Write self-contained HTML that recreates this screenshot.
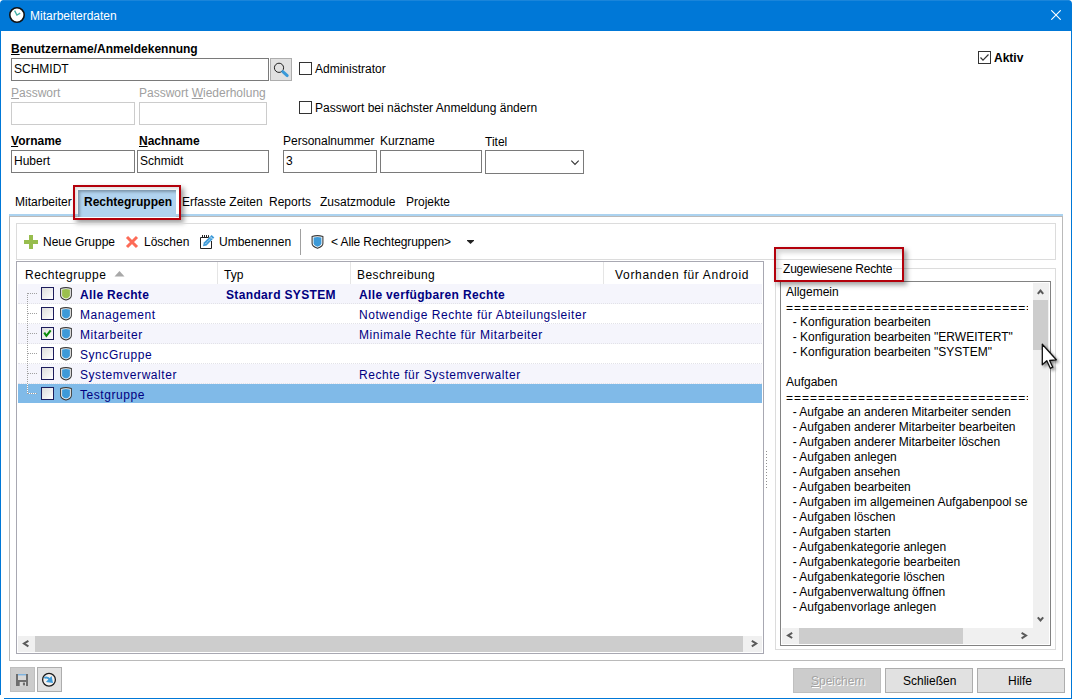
<!DOCTYPE html>
<html><head><meta charset="utf-8">
<style>
*{box-sizing:border-box}
html,body{margin:0;padding:0}
body{width:1072px;height:699px;position:relative;overflow:hidden;background:#fff;font-family:"Liberation Sans",sans-serif;font-size:12px;color:#000}
.a{position:absolute}
.t{position:absolute;white-space:pre;line-height:14px;font-size:12px}
.b{font-weight:bold}
.u{text-decoration:underline;text-underline-offset:1px}
.in{position:absolute;border:1px solid #7a7a7a;background:#fff}
.dis{border-color:#cccccc}
.cb{position:absolute;width:13px;height:13px;border:1px solid #333;background:#fff}
.grey{color:#a0a0a0}
.btn{position:absolute;background:#e1e1e1;border:1px solid #adadad}
</style></head><body>
<!-- title bar -->
<div class="a" style="left:0;top:0;width:1072px;height:31px;background:#0078d7;border-radius:4px 4px 0 0"></div>
<div class="a" style="left:3px;top:0;width:1066px;height:1px;background:#1a85da"></div>
<div class="a" style="left:0;top:31px;width:1px;height:664px;background:#0078d7"></div>
<div class="a" style="left:1071px;top:31px;width:1px;height:668px;background:#0078d7"></div>
<div class="a" style="left:4px;top:698px;width:1068px;height:1px;background:#0078d7"></div>
<svg class="a" style="left:9px;top:7px" width="17" height="17" viewBox="0 0 17 17"><circle cx="8" cy="8" r="7.2" fill="#fff" stroke="#111" stroke-width="1.6"/><path d="M5.6 3.6 L7.9 8 L11.2 6.1" fill="none" stroke="#40aea6" stroke-width="1.3"/></svg>
<div class="t" style="left:30px;top:9px;color:#fff">Mitarbeiterdaten</div>
<svg class="a" style="left:1051px;top:10px" width="10" height="10" viewBox="0 0 10 10"><path d="M0.3 0.3 L9.7 9.7 M9.7 0.3 L0.3 9.7" stroke="#fff" stroke-width="1.1"/></svg>

<!-- form -->
<div class="t b" style="left:11px;top:42px"><span class="u">B</span>enutzername/Anmeldekennung</div>
<div class="in" style="left:11px;top:58px;width:258px;height:23px"></div>
<div class="t" style="left:14px;top:62px">SCHMIDT</div>
<div class="btn" style="left:270px;top:58px;width:22px;height:23px"></div>
<svg class="a" style="left:272px;top:60px" width="18" height="19" viewBox="0 0 18 19"><circle cx="7" cy="7.8" r="4.6" fill="none" stroke="#222" stroke-width="1"/><path d="M10.8 11.6 L15.2 15.6" stroke="#3a9ad9" stroke-width="3" stroke-linecap="round"/></svg>
<div class="cb" style="left:299px;top:62px"></div>
<div class="t" style="left:315px;top:62px">Administrator</div>

<div class="t grey" style="left:11px;top:86px"><span class="u">P</span>asswort</div>
<div class="t grey" style="left:139px;top:86px">Passwort <span class="u">W</span>iederholung</div>
<div class="in dis" style="left:11px;top:102px;width:124px;height:23px"></div>
<div class="in dis" style="left:139px;top:102px;width:128px;height:23px"></div>
<div class="cb" style="left:299px;top:101px"></div>
<div class="t" style="left:315px;top:101px">Passwort bei nächster Anmeldung ändern</div>

<div class="t b" style="left:11px;top:134px"><span class="u">V</span>orname</div>
<div class="t b" style="left:139px;top:134px"><span class="u">N</span>achname</div>
<div class="t" style="left:283px;top:134px">Personalnummer</div>
<div class="t" style="left:380px;top:134px">Kurzname</div>
<div class="t" style="left:485px;top:135px">Titel</div>
<div class="in" style="left:11px;top:150px;width:124px;height:23px"></div>
<div class="t" style="left:14px;top:154px">Hubert</div>
<div class="in" style="left:137px;top:150px;width:132px;height:23px"></div>
<div class="t" style="left:140px;top:154px">Schmidt</div>
<div class="in" style="left:283px;top:150px;width:94px;height:23px"></div>
<div class="t" style="left:286px;top:154px">3</div>
<div class="in" style="left:380px;top:150px;width:102px;height:23px"></div>
<div class="in" style="left:485px;top:150px;width:99px;height:24px"></div>
<svg class="a" style="left:570px;top:159px" width="11" height="8" viewBox="0 0 11 8"><path d="M1.3 1.7 L5 5.4 L8.7 1.7" fill="none" stroke="#333" stroke-width="1.1"/></svg>

<div class="cb" style="left:978px;top:51px;border-color:#333"></div>
<svg class="a" style="left:978px;top:51px" width="13" height="13" viewBox="0 0 13 13"><path d="M2.5 6.5 L5 9.2 L10.5 3.5" fill="none" stroke="#333" stroke-width="1.2"/></svg>
<div class="t b" style="left:994px;top:51px">Aktiv</div>


<!-- tabs -->
<div class="a" style="left:9px;top:216px;width:1054px;height:445px;border:1px solid #bababa"></div>
<div class="a" style="left:9px;top:214px;width:1054px;height:2px;background:#acd3f0"></div>
<div class="a" style="left:78px;top:190px;width:98px;height:27px;background:#b1d3ef;box-shadow:inset 2px 2px 3px rgba(0,0,0,0.28)"></div>
<div class="t" style="left:15px;top:195px">Mitarbeiter</div>
<div class="t b" style="left:84px;top:195px">Rechtegruppen</div>
<div class="t" style="left:182px;top:195px">Erfasste Zeiten</div>
<div class="t" style="left:269px;top:195px">Reports</div>
<div class="t" style="left:320px;top:195px">Zusatzmodule</div>
<div class="t" style="left:406px;top:195px">Projekte</div>
<div class="a" style="left:73px;top:185px;width:108px;height:35px;border:2px solid #b3000b;box-shadow:3px 3px 5px rgba(0,0,0,0.38),inset 2px 2px 3px rgba(0,0,0,0.12)"></div>

<!-- toolbar -->
<div class="a" style="left:16px;top:223px;width:1040px;height:37px;border:1px solid #dcdcdc"></div>
<svg class="a" style="left:24px;top:235px" width="14" height="14" viewBox="0 0 14 14"><path d="M5 0h4v5h5v4h-5v5h-4v-5h-5v-4h5z" fill="#97bd4e"/></svg>
<div class="t" style="left:43px;top:235px">Neue Gruppe</div>
<svg class="a" style="left:125px;top:235px" width="14" height="14" viewBox="0 0 14 14"><path d="M2 2 L12 12 M12 2 L2 12" stroke="#fd6b57" stroke-width="3"/></svg>
<div class="t" style="left:144px;top:235px">Löschen</div>
<svg class="a" style="left:200px;top:234px" width="15" height="15" viewBox="0 0 15 15"><path d="M0.5 3.5 H8 M0.5 3.5 V14.5 H11.5 V7" fill="none" stroke="#222" stroke-width="1"/><path d="M2.5 1 v3 M4.5 1 v3 M6.5 1 v3 M8.5 1.2 v2.6" stroke="#222" stroke-width="1"/><path d="M3 12.3 L3.8 8.6 L11.6 0.9 L14.3 3.6 L6.6 11.4 Z" fill="#3d9ad8"/><path d="M5.2 10.1 L11 4.3" stroke="#fff" stroke-width="0.9" stroke-dasharray="1.1 0.9"/><path d="M10.2 2.6 L12.6 5" stroke="#fff" stroke-width="0.8"/></svg>
<div class="t" style="left:219px;top:235px">Umbenennen</div>
<div class="a" style="left:300px;top:229px;width:1px;height:26px;background:#a0a0a0"></div>
<svg class="a" style="left:310px;top:234px" width="15" height="16" viewBox="0 0 15 16"><path d="M2.1 2.6 Q7.5 0.6 12.9 2.6 V9.4 C12.9 11.9 9.5 13.5 7.5 14.3 C5.5 13.5 2.1 11.9 2.1 9.4 Z" fill="#fff" stroke="#3a3a3a" stroke-width="1.1"/><path d="M3.6 3.6 Q7.5 2.3 11.4 3.6 V9.2 C11.4 11.1 9.1 12.2 7.5 12.8 C5.9 12.2 3.6 11.1 3.6 9.2 Z" fill="#3d9ad8"/></svg>
<div class="t" style="left:331px;top:235px;letter-spacing:-0.1px">&lt; Alle Rechtegruppen&gt;</div>
<svg class="a" style="left:467px;top:240px" width="7" height="4" viewBox="0 0 7 4"><path d="M0 0 H7 V0.8 L3.5 4 L0 0.8 Z" fill="#222"/></svg>

<!-- list -->
<div class="a" style="left:16px;top:261px;width:748px;height:393px;border:1px solid #a8a8b2"></div>
<div class="t" style="left:25px;top:268px;letter-spacing:0.5px">Rechtegruppe</div>
<svg class="a" style="left:114px;top:270px" width="11" height="7" viewBox="0 0 11 7"><path d="M0.5 6.5h10L5.5 1z" fill="#a8a8a8"/></svg>
<div class="a" style="left:217px;top:262px;width:1px;height:22px;background:#e5e5e5"></div>
<div class="a" style="left:350px;top:262px;width:1px;height:22px;background:#e5e5e5"></div>
<div class="a" style="left:603px;top:262px;width:1px;height:22px;background:#e5e5e5"></div>
<div class="t" style="left:224px;top:268px">Typ</div>
<div class="t" style="left:357px;top:268px;letter-spacing:0.4px">Beschreibung</div>
<div class="t" style="left:615px;top:268px;letter-spacing:0.7px">Vorhanden für Android</div>
<div class="a" style="left:18px;top:284px;width:744px;height:20px;background:#f5f5fc"></div>
<div class="a" style="left:18px;top:303px;width:744px;height:1px;border-top:1px dotted #e2e2e8"></div>
<div class="a" style="left:28px;top:293px;width:9px;height:1px;border-top:1px dotted #a0a0a0"></div>
<div class="a" style="left:41px;top:287px;width:13px;height:13px;border:1px solid #1c1c5c;background:linear-gradient(135deg,#dcdcdc,#fff)"></div>
<svg class="a" style="left:59px;top:286px" width="14" height="16" viewBox="0 0 14 16"><path d="M1.65 2.6 Q7 0.6 12.35 2.6 V9.4 C12.35 11.8 9 13.4 7 14.1 C5 13.4 1.65 11.8 1.65 9.4 Z" fill="#fff" stroke="#3a3a3a" stroke-width="1.1"/><path d="M3.1 3.6 Q7 2.3 10.9 3.6 V9.2 C10.9 11 8.6 12.1 7 12.6 C5.4 12.1 3.1 11 3.1 9.2 Z" fill="#9bbf4e"/></svg>
<div class="t b" style="left:80px;top:288px;color:#000080;letter-spacing:0.35px">Alle Rechte</div>
<div class="t b" style="left:226px;top:288px;color:#000080;letter-spacing:0.35px">Standard SYSTEM</div>
<div class="t b" style="left:359px;top:288px;color:#000080;letter-spacing:0.35px">Alle verfügbaren Rechte</div>
<div class="a" style="left:18px;top:304px;width:744px;height:20px;background:#fff"></div>
<div class="a" style="left:18px;top:323px;width:744px;height:1px;border-top:1px dotted #e2e2e8"></div>
<div class="a" style="left:28px;top:313px;width:9px;height:1px;border-top:1px dotted #a0a0a0"></div>
<div class="a" style="left:41px;top:307px;width:13px;height:13px;border:1px solid #1c1c5c;background:linear-gradient(135deg,#dcdcdc,#fff)"></div>
<svg class="a" style="left:59px;top:306px" width="14" height="16" viewBox="0 0 14 16"><path d="M1.65 2.6 Q7 0.6 12.35 2.6 V9.4 C12.35 11.8 9 13.4 7 14.1 C5 13.4 1.65 11.8 1.65 9.4 Z" fill="#fff" stroke="#3a3a3a" stroke-width="1.1"/><path d="M3.1 3.6 Q7 2.3 10.9 3.6 V9.2 C10.9 11 8.6 12.1 7 12.6 C5.4 12.1 3.1 11 3.1 9.2 Z" fill="#3d9ad8"/></svg>
<div class="t" style="left:80px;top:308px;color:#000080;letter-spacing:0.55px">Management</div>
<div class="t" style="left:359px;top:308px;color:#000080;letter-spacing:0.55px">Notwendige Rechte für Abteilungsleiter</div>
<div class="a" style="left:18px;top:324px;width:744px;height:20px;background:#f5f5fc"></div>
<div class="a" style="left:18px;top:343px;width:744px;height:1px;border-top:1px dotted #e2e2e8"></div>
<div class="a" style="left:28px;top:333px;width:9px;height:1px;border-top:1px dotted #a0a0a0"></div>
<div class="a" style="left:41px;top:327px;width:13px;height:13px;border:1px solid #1c1c5c;background:linear-gradient(135deg,#dcdcdc,#fff)"></div>
<svg class="a" style="left:41px;top:327px" width="13" height="13" viewBox="0 0 13 13"><path d="M3.2 5.6 L5.4 8.8 L9.7 3.3" fill="none" stroke="#0b8a0b" stroke-width="2.1"/></svg>
<svg class="a" style="left:59px;top:326px" width="14" height="16" viewBox="0 0 14 16"><path d="M1.65 2.6 Q7 0.6 12.35 2.6 V9.4 C12.35 11.8 9 13.4 7 14.1 C5 13.4 1.65 11.8 1.65 9.4 Z" fill="#fff" stroke="#3a3a3a" stroke-width="1.1"/><path d="M3.1 3.6 Q7 2.3 10.9 3.6 V9.2 C10.9 11 8.6 12.1 7 12.6 C5.4 12.1 3.1 11 3.1 9.2 Z" fill="#3d9ad8"/></svg>
<div class="t" style="left:80px;top:328px;color:#000080;letter-spacing:0.55px">Mitarbeiter</div>
<div class="t" style="left:359px;top:328px;color:#000080;letter-spacing:0.55px">Minimale Rechte für Mitarbeiter</div>
<div class="a" style="left:18px;top:344px;width:744px;height:20px;background:#fff"></div>
<div class="a" style="left:18px;top:363px;width:744px;height:1px;border-top:1px dotted #e2e2e8"></div>
<div class="a" style="left:28px;top:353px;width:9px;height:1px;border-top:1px dotted #a0a0a0"></div>
<div class="a" style="left:41px;top:347px;width:13px;height:13px;border:1px solid #1c1c5c;background:linear-gradient(135deg,#dcdcdc,#fff)"></div>
<svg class="a" style="left:59px;top:346px" width="14" height="16" viewBox="0 0 14 16"><path d="M1.65 2.6 Q7 0.6 12.35 2.6 V9.4 C12.35 11.8 9 13.4 7 14.1 C5 13.4 1.65 11.8 1.65 9.4 Z" fill="#fff" stroke="#3a3a3a" stroke-width="1.1"/><path d="M3.1 3.6 Q7 2.3 10.9 3.6 V9.2 C10.9 11 8.6 12.1 7 12.6 C5.4 12.1 3.1 11 3.1 9.2 Z" fill="#3d9ad8"/></svg>
<div class="t" style="left:80px;top:348px;color:#000080;letter-spacing:0.55px">SyncGruppe</div>
<div class="a" style="left:18px;top:364px;width:744px;height:20px;background:#f5f5fc"></div>
<div class="a" style="left:18px;top:383px;width:744px;height:1px;border-top:1px dotted #e2e2e8"></div>
<div class="a" style="left:28px;top:373px;width:9px;height:1px;border-top:1px dotted #a0a0a0"></div>
<div class="a" style="left:41px;top:367px;width:13px;height:13px;border:1px solid #1c1c5c;background:linear-gradient(135deg,#dcdcdc,#fff)"></div>
<svg class="a" style="left:59px;top:366px" width="14" height="16" viewBox="0 0 14 16"><path d="M1.65 2.6 Q7 0.6 12.35 2.6 V9.4 C12.35 11.8 9 13.4 7 14.1 C5 13.4 1.65 11.8 1.65 9.4 Z" fill="#fff" stroke="#3a3a3a" stroke-width="1.1"/><path d="M3.1 3.6 Q7 2.3 10.9 3.6 V9.2 C10.9 11 8.6 12.1 7 12.6 C5.4 12.1 3.1 11 3.1 9.2 Z" fill="#3d9ad8"/></svg>
<div class="t" style="left:80px;top:368px;color:#000080;letter-spacing:0.55px">Systemverwalter</div>
<div class="t" style="left:359px;top:368px;color:#000080;letter-spacing:0.55px">Rechte für Systemverwalter</div>
<div class="a" style="left:18px;top:384px;width:744px;height:19px;background:#80bae8"></div>
<div class="a" style="left:28px;top:393px;width:9px;height:1px;border-top:1px dotted #a0a0a0"></div>
<div class="a" style="left:41px;top:387px;width:13px;height:13px;border:1px solid #1c1c5c;background:linear-gradient(135deg,#dcdcdc,#fff)"></div>
<svg class="a" style="left:59px;top:386px" width="14" height="16" viewBox="0 0 14 16"><path d="M1.65 2.6 Q7 0.6 12.35 2.6 V9.4 C12.35 11.8 9 13.4 7 14.1 C5 13.4 1.65 11.8 1.65 9.4 Z" fill="#fff" stroke="#3a3a3a" stroke-width="1.1"/><path d="M3.1 3.6 Q7 2.3 10.9 3.6 V9.2 C10.9 11 8.6 12.1 7 12.6 C5.4 12.1 3.1 11 3.1 9.2 Z" fill="#3d9ad8"/></svg>
<div class="t" style="left:80px;top:388px;color:#000080;letter-spacing:0.55px">Testgruppe</div>
<div class="a" style="left:27px;top:384px;width:1px;height:10px;background:#fff"></div><div class="a" style="left:27px;top:393px;width:10px;height:1px;background:#fff"></div><div class="a" style="left:27px;top:293px;width:1px;height:101px;border-left:1px dotted #a0a0a0"></div><div class="a" style="left:28px;top:393px;width:9px;height:1px;border-top:1px dotted #a0a0a0"></div>

<div class="a" style="left:18px;top:636px;width:744px;height:16px;background:#f0f0f0"></div>
<div class="a" style="left:35px;top:636px;width:708px;height:16px;background:#cdcdcd"></div>


<div class="a" style="left:766px;top:451px;width:1px;height:1px;background:#909090"></div><div class="a" style="left:766px;top:454px;width:1px;height:1px;background:#909090"></div><div class="a" style="left:766px;top:457px;width:1px;height:1px;background:#909090"></div><div class="a" style="left:766px;top:460px;width:1px;height:1px;background:#909090"></div><div class="a" style="left:766px;top:463px;width:1px;height:1px;background:#909090"></div><div class="a" style="left:766px;top:466px;width:1px;height:1px;background:#909090"></div><div class="a" style="left:766px;top:469px;width:1px;height:1px;background:#909090"></div><div class="a" style="left:766px;top:472px;width:1px;height:1px;background:#909090"></div><div class="a" style="left:766px;top:475px;width:1px;height:1px;background:#909090"></div><div class="a" style="left:766px;top:478px;width:1px;height:1px;background:#909090"></div><div class="a" style="left:766px;top:481px;width:1px;height:1px;background:#909090"></div><div class="a" style="left:766px;top:484px;width:1px;height:1px;background:#909090"></div><div class="a" style="left:766px;top:487px;width:1px;height:1px;background:#909090"></div>

<!-- right group -->
<div class="a" style="left:775px;top:268px;width:281px;height:382px;border:1px solid #dcdcdc"></div>
<div class="a" style="left:780px;top:281px;width:271px;height:365px;border:1px solid #828282;background:#fff"></div>
<div class="a" style="left:782px;top:262px;width:111px;height:14px;background:#fff"></div>
<div class="t" style="left:783px;top:262px;letter-spacing:-0.2px">Zugewiesene Rechte</div>
<div class="a" style="left:774px;top:247px;width:130px;height:35px;border:2px solid #b3000b;box-shadow:3px 3px 5px rgba(0,0,0,0.38),inset 3px 4px 4px rgba(0,0,0,0.16)"></div>
<div class="a" style="left:781px;top:282px;width:247px;height:346px;overflow:hidden">
<div class="t" style="left:5px;top:3px">Allgemein</div>
<div class="t" style="left:5px;top:19px;letter-spacing:1px">==================================</div>
<div class="t" style="left:5px;top:33px">  - Konfiguration bearbeiten</div>
<div class="t" style="left:5px;top:48px">  - Konfiguration bearbeiten "ERWEITERT"</div>
<div class="t" style="left:5px;top:63px">  - Konfiguration bearbeiten "SYSTEM"</div>
<div class="t" style="left:5px;top:93px">Aufgaben</div>
<div class="t" style="left:5px;top:109px;letter-spacing:1px">==================================</div>
<div class="t" style="left:5px;top:123px">  - Aufgabe an anderen Mitarbeiter senden</div>
<div class="t" style="left:5px;top:138px">  - Aufgaben anderer Mitarbeiter bearbeiten</div>
<div class="t" style="left:5px;top:153px">  - Aufgaben anderer Mitarbeiter löschen</div>
<div class="t" style="left:5px;top:168px">  - Aufgaben anlegen</div>
<div class="t" style="left:5px;top:183px">  - Aufgaben ansehen</div>
<div class="t" style="left:5px;top:198px">  - Aufgaben bearbeiten</div>
<div class="t" style="left:5px;top:213px">  - Aufgaben im allgemeinen Aufgabenpool sehen</div>
<div class="t" style="left:5px;top:228px">  - Aufgaben löschen</div>
<div class="t" style="left:5px;top:243px">  - Aufgaben starten</div>
<div class="t" style="left:5px;top:258px">  - Aufgabenkategorie anlegen</div>
<div class="t" style="left:5px;top:273px">  - Aufgabenkategorie bearbeiten</div>
<div class="t" style="left:5px;top:288px">  - Aufgabenkategorie löschen</div>
<div class="t" style="left:5px;top:303px">  - Aufgabenverwaltung öffnen</div>
<div class="t" style="left:5px;top:318px">  - Aufgabenvorlage anlegen</div>
</div>

<div class="a" style="left:1033px;top:283px;width:16px;height:345px;background:#f0f0f0"></div>
<div class="a" style="left:1033px;top:300px;width:15px;height:50px;background:#cdcdcd"></div>


<div class="a" style="left:782px;top:628px;width:267px;height:16px;background:#f0f0f0"></div>
<div class="a" style="left:799px;top:628px;width:164px;height:16px;background:#cdcdcd"></div>

<svg class="a" style="left:0;top:0" width="1072" height="699"><path d="M28.4 640.8 L24 643.5 L28.4 646.3 M751.8 640.8 L756.2 643.5 L751.8 646.3 M1037.8 293.8 L1040.5 290.5 L1043.2 293.8 M1037.8 617.3 L1040.5 620.5 L1043.2 617.3 M792.2 632.8 L788 635.4 L792.2 638 M1021.6 632.8 L1026 635.5 L1021.6 638.3" fill="none" stroke="#5a5a5a" stroke-width="2"/></svg>
<!-- cursor -->
<svg class="a" style="left:1040px;top:342px;overflow:visible" width="20" height="30" viewBox="0 0 20 30"><defs><filter id="sh" x="-50%" y="-50%" width="200%" height="200%"><feGaussianBlur in="SourceAlpha" stdDeviation="1.6"/><feOffset dx="2" dy="2"/><feComponentTransfer><feFuncA type="linear" slope="0.45"/></feComponentTransfer><feMerge><feMergeNode/><feMergeNode in="SourceGraphic"/></feMerge></filter></defs><path filter="url(#sh)" d="M2.3 2.3 L2.3 22.8 L6.8 18.8 L10.3 26.3 L12.8 25.2 L9.6 18.5 L16.3 17.8 Z" fill="#fff" stroke="#111" stroke-width="1.3" stroke-linejoin="round"/></svg>

<!-- bottom -->
<div class="btn" style="left:10px;top:667px;width:25px;height:25px;background:#cccccc;border-color:#bfbfbf"></div>
<svg class="a" style="left:16px;top:674px" width="12" height="12" viewBox="0 0 12 12"><rect x="0" y="0" width="12" height="12" fill="#6e6e6e"/><rect x="2" y="0" width="8" height="6" fill="#d8d8d8"/><rect x="2" y="0" width="8" height="1.4" fill="#7fb4e0"/><rect x="3.7" y="8" width="6.3" height="4" fill="#d8d8d8"/><rect x="6.9" y="8.6" width="2.1" height="2.8" fill="#6e6e6e"/></svg>
<div class="btn" style="left:37px;top:667px;width:25px;height:25px"></div>
<svg class="a" style="left:41px;top:672px" width="17" height="17" viewBox="0 0 17 17"><circle cx="8" cy="7.7" r="6.4" fill="#f4f0ee" stroke="#1a1a1a" stroke-width="1.3"/><path d="M3.3 6 C5.5 4.8 7.5 5.5 9.3 8.3" fill="none" stroke="#3d9ad8" stroke-width="1.9"/><path d="M10.6 4 L12 10.9 L4.9 10 Z" fill="#3d9ad8"/></svg>
<div class="btn" style="left:793px;top:668px;width:88px;height:25px;background:#cccccc;border-color:#bfbfbf"></div>
<div class="t" style="left:811px;top:674px;color:#a3a3a3;text-shadow:1px 1px 0 #fff"><span class="u">S</span>peichern</div>
<div class="btn" style="left:885px;top:668px;width:88px;height:25px"></div>
<div class="t" style="left:903px;top:674px">Schließen</div>
<div class="btn" style="left:977px;top:668px;width:88px;height:25px"></div>
<div class="t" style="left:1008px;top:674px">Hilfe</div>
</body></html>
